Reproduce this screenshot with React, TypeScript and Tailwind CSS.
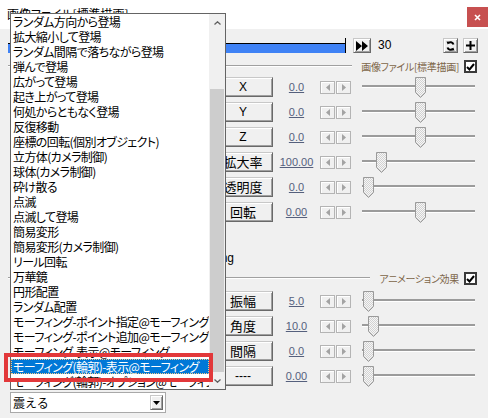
import React from "react";

const effects = [
  "ランダム方向から登場",
  "拡大縮小して登場",
  "ランダム間隔で落ちながら登場",
  "弾んで登場",
  "広がって登場",
  "起き上がって登場",
  "何処からともなく登場",
  "反復移動",
  "座標の回転(個別オブジェクト)",
  "立方体(カメラ制御)",
  "球体(カメラ制御)",
  "砕け散る",
  "点滅",
  "点滅して登場",
  "簡易変形",
  "簡易変形(カメラ制御)",
  "リール回転",
  "万華鏡",
  "円形配置",
  "ランダム配置",
  "モーフィング-ポイント指定@モーフィング",
  "モーフィング-ポイント追加@モーフィング",
  "モーフィング-表示@モーフィング",
  "モーフィング(輪郭)-表示@モーフィング",
  "モーフィング(輪郭)-オプション@モーフィング",
];
const selected = 23;

const drawRows = [
  { label: "X", value: "0.0", thumb: 53 },
  { label: "Y", value: "0.0", thumb: 53 },
  { label: "Z", value: "0.0", thumb: 53 },
  { label: "拡大率", value: "100.00", thumb: 14 },
  { label: "透明度", value: "0.0", thumb: 1 },
  { label: "回転", value: "0.00", thumb: 53 },
];

const animRows = [
  { label: "振幅", value: "5.0", thumb: 1 },
  { label: "角度", value: "10.0", thumb: 6 },
  { label: "間隔", value: "0.0", thumb: 1 },
  { label: "----", value: "0.00", thumb: 1 },
];

const raised =
  "border border-[#c8c8c8] border-r-[#696969] border-b-[#696969] bg-[#f0f0f0] shadow-[inset_1px_1px_0_#ffffff,inset_-1px_-1px_0_#a0a0a0]";

function Thumb({ id }: { id: string }) {
  return (
    <svg width="11" height="21" viewBox="0 0 11 21">
      <defs>
        <pattern id={id} width="2" height="2" patternUnits="userSpaceOnUse">
          <rect width="2" height="2" fill="#f6f6f6" />
          <rect width="1" height="1" fill="#d2d2d2" />
          <rect x="1" y="1" width="1" height="1" fill="#d2d2d2" />
        </pattern>
      </defs>
      <path d="M0.5 0.5H10.5V15.5L5.5 20.5L0.5 15.5Z" fill={`url(#${id})`} stroke="#9a9a9a" />
    </svg>
  );
}

function StepBtn({ dir }: { dir: "l" | "r" }) {
  return (
    <div className="flex h-[13px] w-[15px] items-center justify-center border border-[#b4b4b4] bg-[#f0f0f0] shadow-[inset_1px_1px_0_#ffffff]">
      <svg width="4" height="7" viewBox="0 0 4 7">
        <path d={dir === "l" ? "M4 0V7L0 3.5Z" : "M0 0V7L4 3.5Z"} fill="#a3a3a3" />
      </svg>
    </div>
  );
}

function CheckBox() {
  return (
    <div className="flex h-[13px] w-[13px] items-center justify-center border-2 border-[#3a3a3a] bg-white">
      <svg width="9" height="8" viewBox="0 0 9 8">
        <path d="M1 4L3.5 6.5L8 1" fill="none" stroke="#000" strokeWidth="2" />
      </svg>
    </div>
  );
}

function ParamRow({ label, value, thumb, id }: { label: string; value: string; thumb: number; id: string }) {
  const latin = /^[A-Z-]+$/.test(label);
  return (
    <div className="flex h-[20px] items-start">
      <div className="w-[213px] shrink-0" />
      <div
        className={`${raised} flex h-[20px] w-[60px] shrink-0 items-center justify-center text-black ${
          latin ? "font-['Liberation_Sans',sans-serif] text-[12px]" : "text-[13px]"
        }`}
      >
        {label}
      </div>
      <span className="w-[47px] shrink-0 text-center font-['Liberation_Sans',sans-serif] text-[11px] leading-[20px] text-[#55607d] underline">
        {value}
      </span>
      <div className="mt-[4px] flex gap-[1px]">
        <StepBtn dir="l" />
        <StepBtn dir="r" />
      </div>
      <div className="relative ml-[11px] h-[21px] w-[113px]">
        <div className="absolute left-0 right-0 top-[8px] h-[3px] border-b border-white bg-[#9b9b9b]" />
        <div className="absolute top-0" style={{ left: thumb }}>
          <Thumb id={id} />
        </div>
      </div>
    </div>
  );
}

function GroupHeader({ title, className }: { title: string; className: string }) {
  return (
    <div className={`flex h-[14px] items-start ${className}`}>
      <div className="ml-[8px] mt-[5px] h-[2px] flex-1 border-t border-b border-t-[#a0a0a0] border-b-white" />
      <span className="ml-[9px] text-[10px] leading-[14px] tracking-[-0.3px] text-[#7d6548] [font-feature-settings:'palt']">
        {title}
      </span>
      <div className="ml-[5px]">
        <CheckBox />
      </div>
      <div className="w-[11px]" />
    </div>
  );
}

export default function App() {
  return (
    <div className="relative h-[418px] w-[488px] overflow-hidden bg-[#f0f0f0] font-['Noto_Sans_CJK_JP',sans-serif] text-black">
      {/* title bar */}
      <div className="flex h-[29px] items-start bg-white">
        <span className="pl-[7px] pt-[6px] text-[12px] leading-[15px] [font-feature-settings:'palt']">画像ファイル[標準描画]</span>
        <div className="flex-1" />
        <div className="mt-[7px] flex h-[20px] w-[21px] items-center justify-center bg-[#c75050]">
          <svg width="7" height="7" viewBox="0 0 7 7">
            <path d="M1 1L6 6M6 1L1 6" stroke="#fff" strokeWidth="1.6" />
          </svg>
        </div>
      </div>

      {/* timeline */}
      <div className="mt-[9px] flex h-[15px] items-start">
        <div className="ml-[8px] flex h-[15px] w-[338px] flex-col justify-end border-r border-black">
          <div className="h-[10px] border-t border-black bg-[#3f82f5]" />
        </div>
        <div className={`${raised} ml-[7px] flex h-[15px] w-[18px] items-center justify-center`}>
          <svg width="12" height="10" viewBox="0 0 12 10">
            <path d="M0 0L6 5L0 10Z M6 0L12 5L6 10Z" fill="#000" />
          </svg>
        </div>
        <span className="ml-[7px] font-['Liberation_Sans',sans-serif] text-[12px] leading-[15px]">30</span>
        <div className="flex-1" />
        <div className={`${raised} flex h-[15px] w-[15px] items-center justify-center`}>
          <svg width="9" height="10" viewBox="0 0 9 10">
            <path d="M7.5 3.5A3.2 3.2 0 0 0 2 2.4" fill="none" stroke="#000" strokeWidth="2" />
            <path d="M0.5 0.5L3.5 0.8L1.8 3.5Z" fill="#000" />
            <path d="M1.5 6.5A3.2 3.2 0 0 0 7 7.6" fill="none" stroke="#000" strokeWidth="2" />
            <path d="M8.5 9.5L5.5 9.2L7.2 6.5Z" fill="#000" />
          </svg>
        </div>
        <div className={`${raised} ml-[5px] flex h-[15px] w-[15px] items-center justify-center`}>
          <svg width="9" height="9" viewBox="0 0 9 9">
            <path d="M4.5 0V9M0 4.5H9" stroke="#000" strokeWidth="2" />
          </svg>
        </div>
        <div className="w-[10px]" />
      </div>

      <GroupHeader title="画像ファイル[標準描画]" className="mt-[7px]" />

      <div className="mt-[3px] flex flex-col gap-[5px]">
        {drawRows.map((r, i) => (
          <ParamRow key={r.label} {...r} id={`d${i}`} />
        ))}
      </div>

      <div className="mt-[29px] h-[15px] w-[234px] text-right font-['Liberation_Sans',sans-serif] text-[12px] leading-[15px]">
        Sampling
      </div>

      <GroupHeader title="アニメーション効果" className="mt-[6px]" />

      <div className="mt-[5px] flex flex-col gap-[5px]">
        {animRows.map((r, i) => (
          <ParamRow key={r.label} {...r} id={`a${i}`} />
        ))}
      </div>

      {/* effect combobox */}
      <div className="ml-[10px] mt-[6px] flex h-[21px] w-[156px] items-center border border-[#a9a9a9] bg-white">
        <span className="pl-[2px] text-[12px] leading-[15px]">震える</span>
        <div className={`${raised} ml-auto mr-[2px] flex h-[15px] w-[13px] items-center justify-center`}>
          <svg width="7" height="4" viewBox="0 0 7 4">
            <path d="M0 0H7L3.5 4Z" fill="#000" />
          </svg>
        </div>
      </div>

      {/* open dropdown list */}
      <div className="absolute left-[10px] top-[13px] flex h-[377px] w-[216px] border border-[#646464] bg-white">
        <div className="flex w-[198px] flex-col overflow-hidden">
          {effects.map((e, i) => (
            <div
              key={e}
              className={`h-[15px] shrink-0 whitespace-nowrap pl-[2px] text-[12px] leading-[16px] tracking-[-0.6px] [font-feature-settings:'palt'] ${
                i === selected
                  ? "bg-[#0078d7] text-white outline-1 outline-offset-[-1px] outline-dotted outline-[#f2c98a]"
                  : "text-black"
              }`}
            >
              {e}
            </div>
          ))}
        </div>
        <div className="flex w-[16px] flex-col bg-[#f0f0f0]">
          <div className="flex h-[17px] items-center justify-center">
            <svg width="7" height="4" viewBox="0 0 7 4">
              <path d="M0.5 3.5L3.5 0.8L6.5 3.5" fill="none" stroke="#606060" strokeWidth="1.3" />
            </svg>
          </div>
          <div className="flex-1">
            <div className="mx-[1px] mt-[58px] h-[283px] bg-[#cdcdcd]" />
          </div>
          <div className="flex h-[17px] items-center justify-center">
            <svg width="7" height="4" viewBox="0 0 7 4">
              <path d="M0.5 0.5L3.5 3.2L6.5 0.5" fill="none" stroke="#606060" strokeWidth="1.3" />
            </svg>
          </div>
        </div>
      </div>

      {/* red highlight */}
      <div className="absolute left-[4px] top-[353px] h-[29px] w-[209px] border-4 border-[#e2383a]" />
    </div>
  );
}
